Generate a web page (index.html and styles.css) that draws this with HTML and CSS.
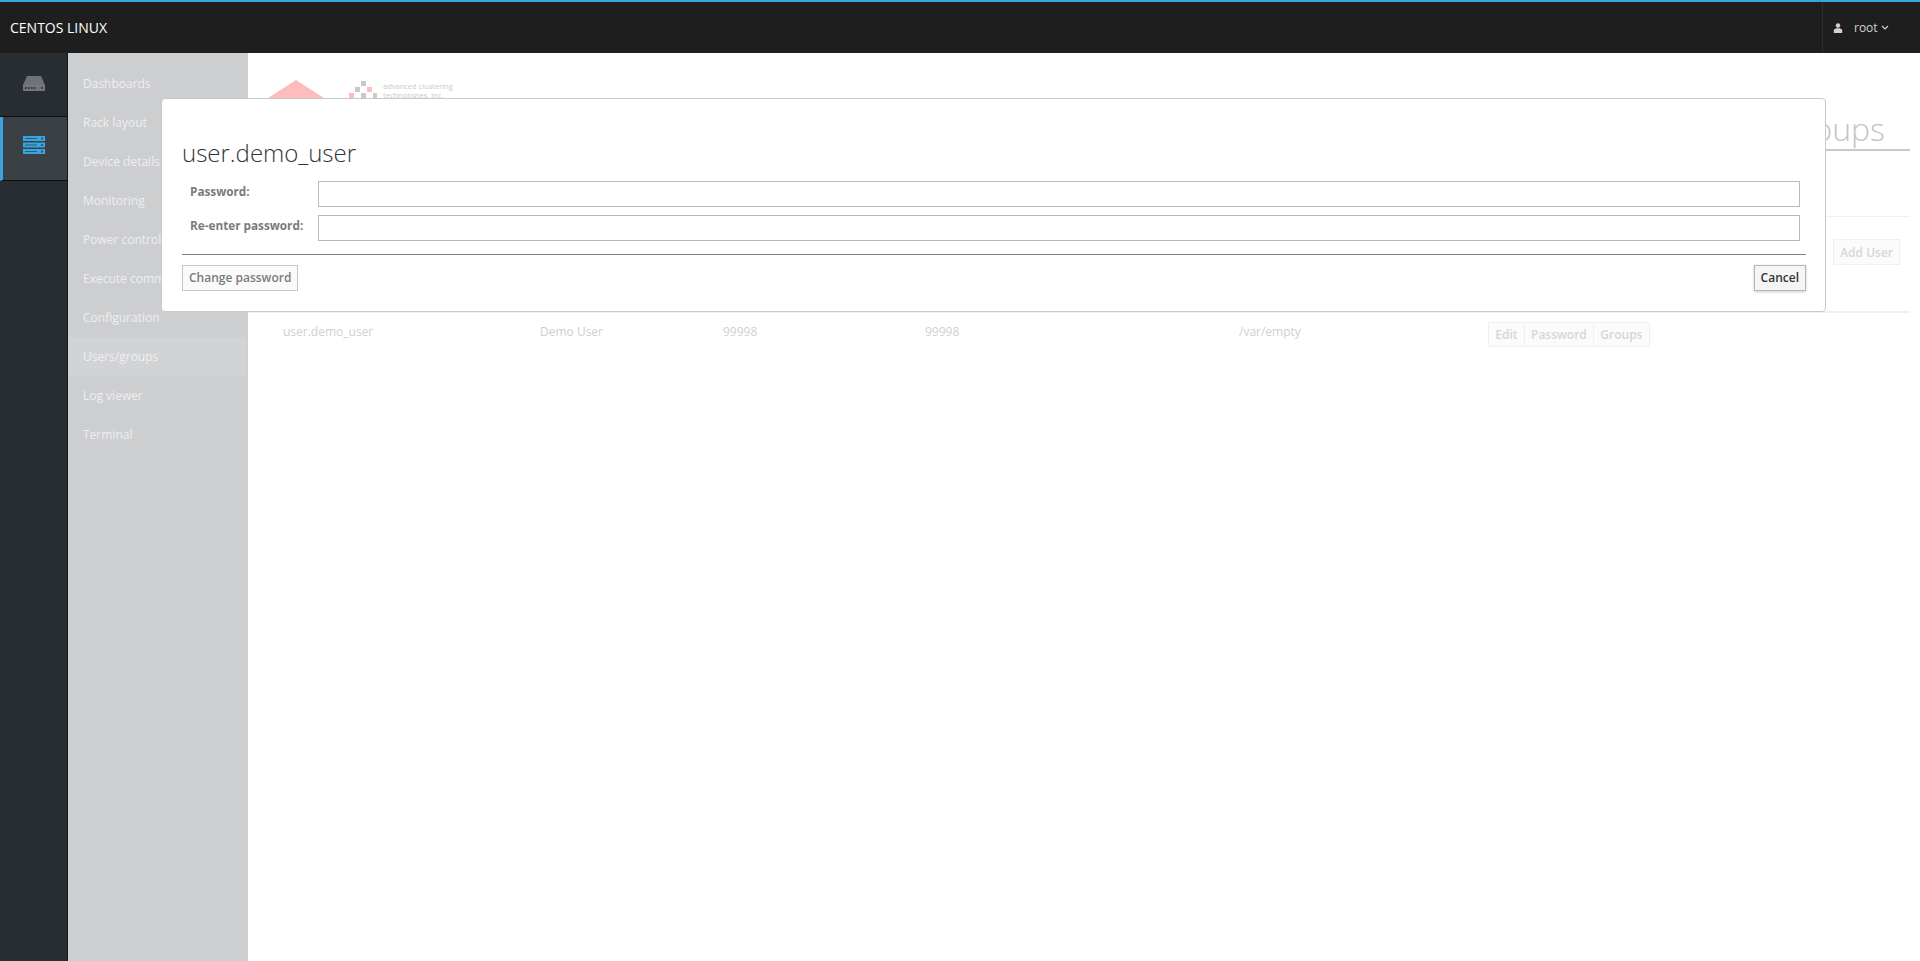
FILE: index.html
```html
<!DOCTYPE html>
<html lang="en">
<head>
<meta charset="utf-8">
<title>Users/groups</title>
<link rel="stylesheet" href="styles.css">
</head>
<body>
<header class="topbar">
  <div class="brand">CENTOS LINUX</div>
  <div class="user-menu">
    <svg class="user-icon" viewBox="0 0 12 12" aria-hidden="true"><circle cx="6" cy="3" r="2.7"/><path d="M1 12V8.600C1 7.200 3 6.400 4.400 6.200h3.200c1.400.2 3.400 1 3.400 2.400V12z"/></svg>
    <span>root</span>
    <svg class="chevron" viewBox="0 0 8 5" aria-hidden="true"><path d="M1 1l3 3 3-3"/></svg>
  </div>
</header>
<div class="shell">
  <aside class="rail">
    <div class="rail-item">
      <svg class="rail-icon" viewBox="0 0 22 15" aria-hidden="true"><path class="disk-top" d="M4 0h14l4 9H0z"/><rect class="disk-base" y="9" width="22" height="6"/><path class="disk-slot" d="M2 11h2v2H2zM5 11h2v2H5zM8 11h2v2H8zM11 11h2v2h-2zM18 11h2v2h-2z"/></svg>
    </div>
    <div class="rail-item active">
      <svg class="rail-icon" viewBox="0 0 22 18" aria-hidden="true"><g class="stack"><rect width="22" height="5"/><rect y="6.500" width="22" height="5"/><rect y="13" width="22" height="5"/></g><path class="stack-line" d="M2 2h12v1H2zM2 8.500h12v1H2zM2 15h12v1H2zM18 1.500h2v2h-2zM18 8h2v2h-2zM18 14.500h2v2h-2z"/></svg>
    </div>
  </aside>
  <nav class="nav">
    <a class="nav-item">Dashboards</a>
    <a class="nav-item">Rack layout</a>
    <a class="nav-item">Device details</a>
    <a class="nav-item">Monitoring</a>
    <a class="nav-item">Power control</a>
    <a class="nav-item">Execute command</a>
    <a class="nav-item">Configuration</a>
    <a class="nav-item current">Users/groups</a>
    <a class="nav-item">Log viewer</a>
    <a class="nav-item">Terminal</a>
  </nav>
  <main class="main">
    <div class="page-head">
      <div class="logo">
        <svg class="logo-roof" viewBox="0 0 56 20" aria-hidden="true"><path d="M28 0l28 18v2H0v-2z"/></svg>
        <svg class="logo-mark" viewBox="0 0 31 20" aria-hidden="true"><path class="g" d="M15 1h5v5h-5zM9 7h5v5H9zM15 13h5v5h-5zM27 13h4v5h-4z"/><path class="r" d="M21 7h5v5h-5zM3 13h5v5H3z"/></svg>
        <div class="logo-text">advanced clustering<br>technologies, inc.</div>
      </div>
      <h1 class="page-title">Users and groups</h1>
    </div>
    <div class="toolbar"><button class="ghost-btn">Add User</button></div>
    <div class="user-row">
      <span class="cell c-name">user.demo_user</span>
      <span class="cell c-full">Demo User</span>
      <span class="cell c-uid">99998</span>
      <span class="cell c-gid">99998</span>
      <span class="cell c-home">/var/empty</span>
      <div class="btn-group">
        <button class="ghost-btn">Edit</button><button class="ghost-btn">Password</button><button class="ghost-btn">Groups</button>
      </div>
    </div>
  </main>
</div>
<section class="modal">
  <h2 class="modal-title">user.demo_user</h2>
  <div class="form-row">
    <label class="form-label" for="pw1">Password:</label>
    <input class="form-input" id="pw1" type="password">
  </div>
  <div class="form-row">
    <label class="form-label" for="pw2">Re-enter password:</label>
    <input class="form-input" id="pw2" type="password">
  </div>
  <hr class="modal-rule">
  <div class="modal-actions">
    <button class="btn btn-disabled">Change password</button>
    <button class="btn btn-cancel">Cancel</button>
  </div>
</section>
</body>
</html>
```
FILE: styles.css
```css
* { box-sizing: border-box; }
html, body { height: 100%; }
body {
  margin: 0;
  display: flex;
  flex-direction: column;
  height: 961px;
  overflow: hidden;
  background: #fff;
  font-family: "Open Sans", "Liberation Sans", sans-serif;
  font-size: 12px;
}
.topbar {
  flex: 0 0 53px;
  display: flex;
  align-items: center;
  justify-content: space-between;
  background: #1e1e1e;
  border-top: 2px solid #39a5dc;
  color: #fff;
}
.brand { padding-left: 10px; font-size: 14px; line-height: 20px; }
.user-menu {
  align-self: stretch;
  width: 98px;
  display: flex;
  align-items: center;
  padding-left: 10px;
  border-left: 1px solid #2e2e2e;
  color: #d1d1d1;
  font-size: 12px;
}
.user-icon { width: 10px; height: 10px; margin-right: 11px; fill: #d1d1d1; }
.chevron { width: 8px; height: 5px; margin-left: 3px; fill: none; stroke: #d1d1d1; stroke-width: 1.2; }
.shell { flex: 1; display: flex; min-height: 0; }
.rail {
  flex: 0 0 68px;
  background: #282d33;
  border-right: 1px solid #14171a;
}
.rail-item {
  height: 64px;
  display: flex;
  align-items: center;
  justify-content: center;
  padding-bottom: 2px;
  border-bottom: 1px solid #0b0d0f;
}
.rail-item.active {
  background: #3b4047;
  border-left: 3px solid #39a5dc;
  padding-right: 3px;
  padding-bottom: 7px;
}
.rail-icon { width: 22px; display: block; }
.disk-top { fill: #6f7276; }
.disk-base { fill: #74777b; }
.disk-slot { fill: #3a3d42; }
.stack { fill: #39a5dc; }
.stack-line { fill: #1f5f85; }
.nav {
  flex: 0 0 180px;
  display: flex;
  flex-direction: column;
  padding-top: 11px;
  background: #cdced0;
}
.nav-item {
  height: 39px;
  padding-left: 15px;
  line-height: 39px;
  color: #eeeff0;
  font-size: 12px;
  white-space: nowrap;
}
.nav-item.current { background: #d2d3d5; margin-right: 1px; }
.main { flex: 1; min-width: 0; padding-right: 10px; display: flex; flex-direction: column; }
.page-head {
  height: 98px;
  display: flex;
  justify-content: space-between;
  border-bottom: 2px solid #c9c9c9;
  padding: 27px 25px 0 20px;
}
.logo { display: flex; align-items: flex-start; }
.logo-roof { width: 56px; height: 20px; margin-right: 22px; fill: #ffbcbc; }
.logo-mark { width: 31px; height: 20px; }
.logo-mark .g { fill: #c9c9c9; }
.logo-mark .r { fill: #ffbcbc; }
.logo-text { margin: 2px 0 0 6px; font-size: 7.500px; line-height: 9px; color: #c9c9c9; }
.page-title {
  margin: 0;
  padding-top: 29px;
  font-size: 32px;
  line-height: 40px;
  font-weight: 300;
  color: #c4c4c4;
}
.toolbar {
  height: 97px;
  margin-top: 65px;
  display: flex;
  align-items: flex-start;
  justify-content: flex-end;
  padding: 22px 10px 0 0;
  border-top: 1px solid #f0f0f0;
  border-bottom: 2px solid #f0f0f0;
}
.ghost-btn {
  height: 26px;
  padding: 0 6px;
  border: 1px solid #f0f0f0;
  background: #fbfbfb;
  color: #d6d6d6;
  font: 600 12px "Open Sans", "Liberation Sans", sans-serif;
}
.user-row { display: flex; padding-top: 10px; color: #cfcfcf; }
.cell { height: 24px; line-height: 18px; }
.c-name { margin-left: 35px; width: 257px; }
.c-full { width: 183px; }
.c-uid { width: 202px; }
.c-gid { width: 314px; }
.c-home { width: 249px; }
.btn-group { display: flex; margin-top: -1px; }
.btn-group .ghost-btn { height: 25px; padding: 0 6.250px; margin-right: -1px; }
.modal {
  position: absolute;
  left: 161px;
  top: 98px;
  width: 1665px;
  height: 214px;
  padding: 31px 19px 0 20px;
  background: #fff;
  border: 1px solid #c9c9c9;
  border-radius: 4px;
}
.modal-title {
  margin: 0 0 6px;
  font-size: 24px;
  line-height: 45px;
  font-weight: 300;
  color: #333;
}
.form-row { display: flex; align-items: center; height: 26px; margin-bottom: 8px; padding: 0 6px 0 8px; }
.form-label { flex: 0 0 128px; font-weight: 700; color: #7b7b7b; font-size: 11.750px; line-height: 18px; margin-top: -7px; }
.form-input { flex: 1; height: 26px; border: 1px solid #bababa; background: #fff; }
.modal-rule { margin: 13px 0 10px; border: 0; border-top: 1px solid #7f7f7f; }
.modal-actions { display: flex; justify-content: space-between; }
.btn {
  height: 26px;
  padding: 0 6px 1px;
  font: 600 12px "Open Sans", "Liberation Sans", sans-serif;
}
.btn-disabled { background: #fafafa; border: 1px solid #c8c8c8; color: #7b7b7b; }
.btn-cancel { background: #f5f5f5; border: 1px solid #b5b5b5; color: #333; box-shadow: 0 1px 3px rgba(0,0,0,.2); }
```
